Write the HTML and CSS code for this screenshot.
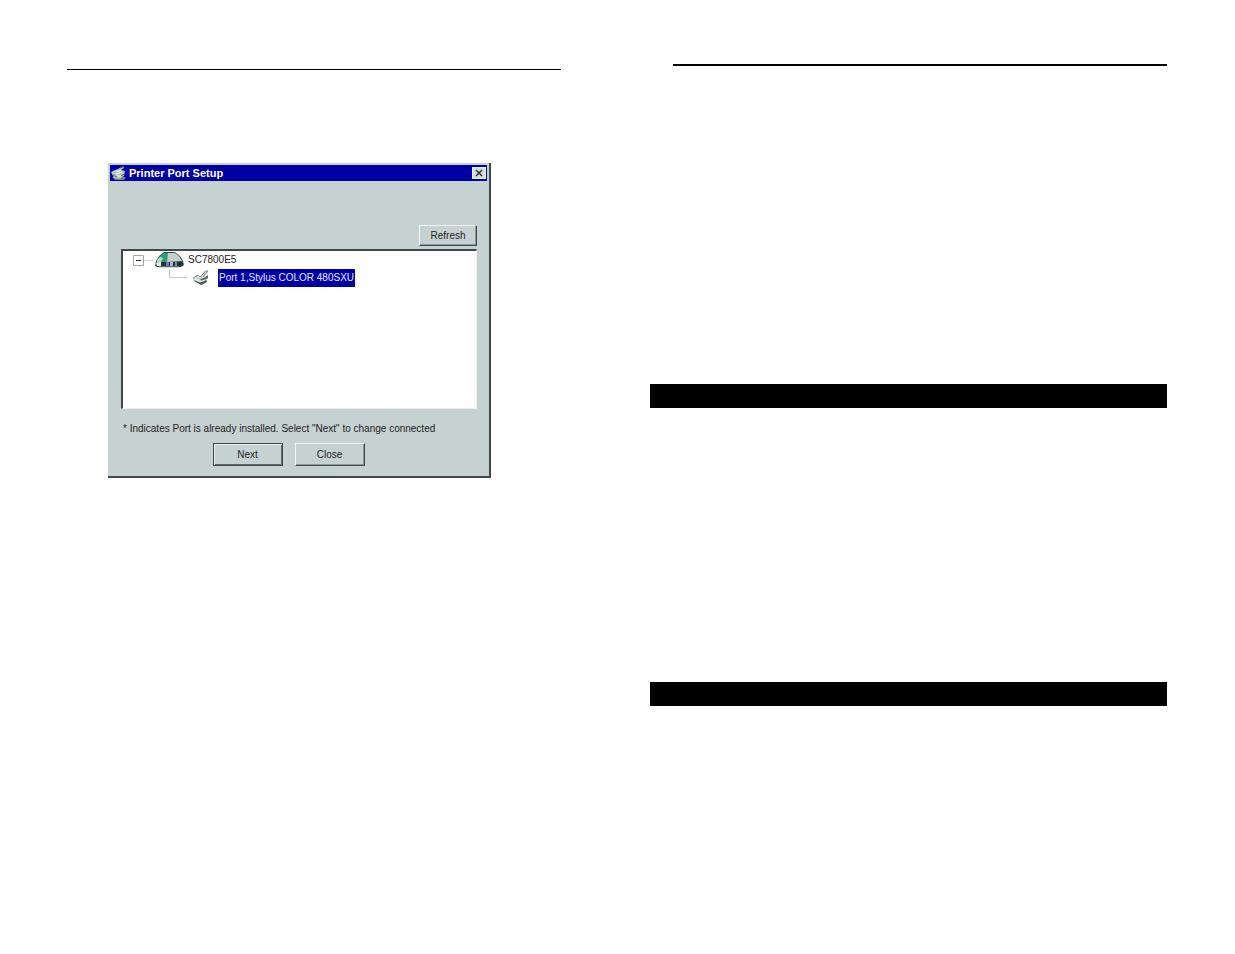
FILE: index.html
```html
<!DOCTYPE html>
<html lang="en">
<head>
    <meta charset="UTF-8">
    <meta name="viewport" content="width=device-width, initial-scale=1.0">
    <title>Printer Port Setup</title>
    <link rel="stylesheet" href="styles.css">
</head>
<body>
    <div class="spread">
        <main class="page page-left">
            <hr class="rule">
            <section class="dialog" aria-labelledby="dialogTitle">
                <header class="title-bar">
                    <svg class="title-icon" viewBox="0 0 16 14" aria-hidden="true">
                        <path d="M1 11h14l-2 3H4z" fill="#75857c"/>
                        <path d="M0 6l4-2 3-1 5-3 1 2-3 2 4 1-1 5-5 3-5-1z" fill="#b4c8c0"/>
                        <path d="M5 6l5-2M5 8l6-2M3 10h8" stroke="#f4faf6" stroke-width="1"/>
                        <path d="M2 9l4 2M9 2l3-1M10 10l3-2" stroke="#46585c" stroke-width="1"/>
                    </svg>
                    <h1 id="dialogTitle">Printer Port Setup</h1>
                    <button class="close-button" type="button" aria-label="Close window">
                        <svg viewBox="0 0 8 8" aria-hidden="true">
                            <path d="M1 1l6 6M7 1L1 7" stroke="#333" stroke-width="1.500"/>
                        </svg>
                    </button>
                </header>
                <div class="dialog-body">
                    <button class="button refresh" type="button">Refresh</button>
                    <ul class="tree">
                        <li class="row">
                            <button class="toggle" type="button" aria-label="Collapse SC7800E5">
                                <svg viewBox="0 0 21 11" aria-hidden="true">
                                    <path d="M.5 .5h10v10H.5z" fill="#fff" stroke="#a3a8a6"/>
                                    <path d="M3 5.500h5" stroke="#333"/>
                                    <path d="M11 5.500h10" stroke="#d0d4d2"/>
                                </svg>
                            </button>
                            <svg class="server-icon" viewBox="0 0 30 18" aria-hidden="true">
                                <path d="M1 15l1-5 3-5 5-4h11l5 4 3 5 1 4-3 2H3z" fill="#3c4c4c"/>
                                <path d="M2 12l3-6 5-4h5l-2 9-5 1z" fill="#2f9c74"/>
                                <path d="M3 9l3-3 3 1-2 4-4 1z" fill="#b4dccb"/>
                                <path d="M14 2h7l4 3 3 5-15 1z" fill="#c3d0cc"/>
                                <path d="M2 12l5-1v4H3z" fill="#e4f0ea"/>
                                <path d="M7 11h21l1 3-3 2H7z" fill="#263038"/>
                                <path d="M12 11h3v4h-3z" fill="#7176b8"/>
                                <path d="M16 11h3v4h-3z" fill="#b0b2e0"/>
                                <path d="M21 11h2v4h-2z" fill="#8088b4"/>
                                <path d="M5 16h20" stroke="#a3aaa8"/>
                            </svg>
                            <span class="node">SC7800E5</span>
                        </li>
                        <li class="row child">
                            <svg class="branch" viewBox="0 0 18 18" aria-hidden="true">
                                <path d="M.5 0v8.500H18" fill="none" stroke="#c4c8c6"/>
                            </svg>
                            <svg class="printer-icon" viewBox="0 0 17 16" aria-hidden="true">
                                <path d="M1 8l5-3 2 2 4-6 4-1-4 6 4 1-1 5-5 3-8-4z" fill="#d0d8d4"/>
                                <path d="M1 8l5-3 2 2 6-6 2 0-5 6M2 10l7 4" fill="none" stroke="#858d8a"/>
                                <path d="M2 11l7 4 6-3-1-2-5 2z" fill="#4e5654"/>
                                <path d="M8 9l4-1 4-3v3l-6 3z" fill="#59625f"/>
                                <path d="M3 9l5 3 5-2" fill="none" stroke="#fff"/>
                            </svg>
                            <span class="node selected">Port 1,Stylus COLOR 480SXU</span>
                        </li>
                    </ul>
                    <p class="note">* Indicates Port is already installed. Select "Next" to change connected</p>
                    <div class="actions">
                        <button class="button default" type="button">Next</button>
                        <button class="button" type="button">Close</button>
                    </div>
                </div>
            </section>
        </main>
        <div class="page page-right">
            <hr class="rule thick">
            <div class="band"></div>
            <div class="band"></div>
        </div>
    </div>
</body>
</html>
```

FILE: styles.css
```css
* {
    box-sizing: border-box;
}
body {
    margin: 0;
    background: #ffffff;
    color: #222222;
    font-family: "Liberation Sans", Arial, sans-serif;
    font-size: 10px;
    line-height: 12px;
}
.spread {
    display: grid;
    grid-template-columns: 494fr 517fr;
    gap: 89px;
    padding: 64px 68px 64px 67px;
}
.page-left {
    padding-top: 5px;
}
.rule {
    height: 1px;
    margin: 0;
    border: none;
    background: #000000;
}
.rule.thick {
    height: 2px;
    margin-left: 23px;
}
.band {
    height: 24px;
    margin-top: 274px;
    background: #000000;
}
.thick + .band {
    margin-top: 318px;
}
.dialog {
    max-width: 383px;
    margin: 93px 0 0 41px;
    padding: 2px;
    background: #c6d2d2;
    border-right: 2px solid #3c484c;
    border-bottom: 2px solid #3c484c;
}
.title-bar {
    display: flex;
    align-items: center;
    gap: 2px;
    height: 16px;
    padding: 0 1px;
    background: #0000a4;
    color: #ffffff;
}
.title-bar h1 {
    flex: 1;
    margin: 0;
    font-size: 11px;
    line-height: 16px;
}
.title-icon {
    width: 16px;
    height: 14px;
}
.close-button {
    display: flex;
    align-items: center;
    justify-content: center;
    width: 14px;
    height: 12px;
    padding: 0;
    border: 1px solid #e8f0f0;
    background: #d4dede;
}
.close-button svg {
    width: 8px;
    height: 8px;
}
.dialog-body {
    display: flex;
    flex-direction: column;
    padding: 44px 10px 8px 11px;
}
.button {
    width: 70px;
    height: 23px;
    padding: 0;
    border: 1px solid;
    border-color: #f0f6f6 #3c484c #3c484c #f0f6f6;
    box-shadow: inset -1px -1px #8c9898;
    background: #c6d2d2;
    color: #222222;
    font: inherit;
}
.refresh {
    align-self: flex-end;
    width: 58px;
    height: 21px;
}
.default {
    border-color: #3c484c;
    box-shadow: inset 1px 1px #e8f0f0, inset -1px -1px #5c686a;
}
.tree {
    height: 160px;
    margin: 3px 0 0;
    padding: 0 0 0 10px;
    list-style: none;
    background: #ffffff;
    border: 1px solid;
    border-width: 2px 1px 1px 2px;
    border-color: #3c484c #e8f0f0 #e8f0f0 #3c484c;
}
.row {
    display: flex;
    align-items: center;
    height: 18px;
}
.toggle {
    display: flex;
    padding: 0;
    border: none;
    background: none;
}
.toggle svg {
    width: 21px;
    height: 11px;
}
.server-icon {
    width: 30px;
    height: 18px;
    margin-right: 3px;
}
.node {
    padding: 0 1px;
    line-height: 18px;
    white-space: nowrap;
}
.child {
    padding-left: 36px;
}
.branch {
    width: 18px;
    height: 18px;
}
.printer-icon {
    width: 17px;
    height: 16px;
    margin: 0 9px 0 5px;
}
.selected {
    background: #0000a4;
    color: #e4e8ff;
}
.note {
    margin: 14px 0 8px 2px;
}
.actions {
    display: flex;
    justify-content: center;
    gap: 12px;
    padding-right: 21px;
}
.button:focus-visible,
.close-button:focus-visible,
.toggle:focus-visible {
    outline: 1px dotted #000000;
}
```
